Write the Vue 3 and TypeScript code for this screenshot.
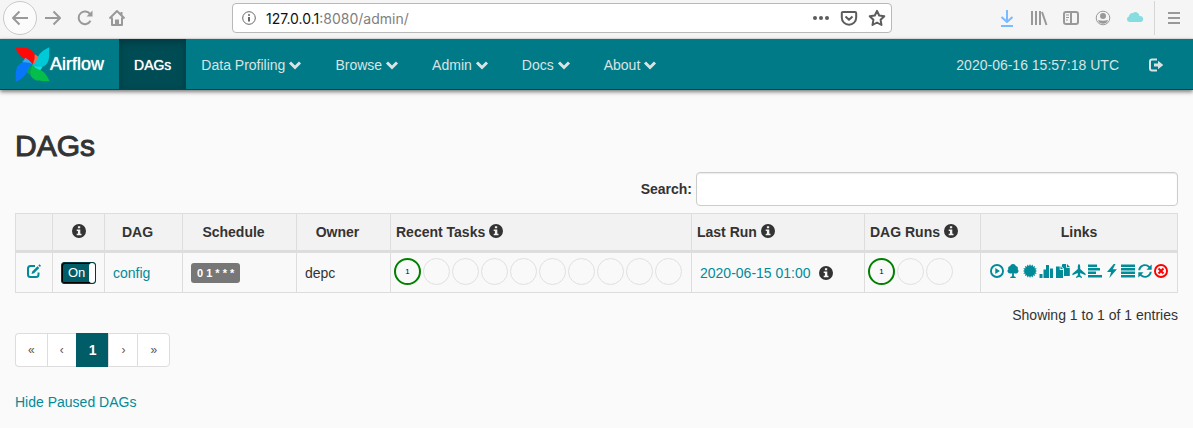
<script setup lang="ts">
import { ref } from 'vue'

interface MenuItem {
  label: string
  active?: boolean
}

interface LinkIcon {
  title: string
  path: string
  danger?: boolean
}

interface Blade {
  angle: number
  color: string
  light: string
}

const menu: MenuItem[] = [
  { label: 'DAGs', active: true },
  { label: 'Data Profiling' },
  { label: 'Browse' },
  { label: 'Admin' },
  { label: 'Docs' },
  { label: 'About' },
]

const blades: Blade[] = [
  { angle: 0, color: '#ff0808', light: '#ff6846' },
  { angle: 90, color: '#00c9d8', light: '#19dce5' },
  { angle: 180, color: '#04bd4b', light: '#00a553' },
  { angle: 270, color: '#0876f8', light: '#32a9f7' },
]

const infoPath =
  'M7 0a7 7 0 1 0 0 14A7 7 0 0 0 7 0zM5.9 2.3h2.3v2H5.9zM4.7 5.4h3.6v4.4h1.2v1.5H4.7V9.8h1.2V6.9H4.7z'

const linkIcons: LinkIcon[] = [
  {
    title: 'Trigger Dag',
    path: 'M7 0a7 7 0 1 0 0 14A7 7 0 0 0 7 0zM7 1.9a5.1 5.1 0 1 1 0 10.2A5.1 5.1 0 0 1 7 1.9zM5.3 4v6l4.6-3z',
  },
  {
    title: 'Tree View',
    path: 'M7 0a3 3 0 0 0-2.9 2A2.5 2.5 0 0 0 2.3 5.2A2.5 2.5 0 0 0 3.8 9.5Q5.3 9.9 6.1 8.9V12.3L4.3 13V14H9.7V13L7.9 12.3V8.9Q8.7 9.9 10.2 9.5A2.5 2.5 0 0 0 11.7 5.2A2.5 2.5 0 0 0 9.9 2A3 3 0 0 0 7 0z',
  },
  {
    title: 'Graph View',
    path: 'M7 0 8 2.1 9.7 .5 10 2.8 12 2 11.5 4.2 13.7 4.2 12.3 6 14 7 12.3 8 13.7 9.8 11.5 9.8 12 12 10 11.2 9.7 13.5 8 11.9 7 14 6 11.9 4.3 13.5 4 11.2 2 12 2.5 9.8 .3 9.8 1.7 8 0 7 1.7 6 .3 4.2 2.5 4.2 2 2 4 2.8 4.3 .5 6 2.1z',
  },
  {
    title: 'Tasks Duration',
    path: 'M.5 10h3v4h-3zM4.500 5.500h2.500V14H4.500zM7 1h3v13H7zM11 4.500h3V14h-3z',
  },
  {
    title: 'Task Tries',
    path: 'M0 2.5h3.7V6H7v8H0zM4.5 2.3 7 4.9H4.5zM6.3 0h3.8v3.8h3.7V12H8V4.8L5.7 2.4zM11 0l3 3h-3z',
  },
  {
    title: 'Landing Times',
    path: 'M7 0Q8.1 .4 8.2 2.4V5L13.6 9.8V11.2L8.2 9V11.3L10 13V14L7 13.1 4 14V13L5.8 11.3V9L.4 11.2V9.8L5.8 5V2.4Q5.9 .4 7 0z',
  },
  {
    title: 'Gantt View',
    path: 'M0 .5h9v2.500H0zM0 4h12v2.500H0zM0 7.500h8v2.500H0zM0 11h14v2.500H0z',
  },
  {
    title: 'Code View',
    path: 'M8.7 0 2 8H6.1L4.3 14 11.9 5.3H7.8L10.5 0z',
  },
  {
    title: 'Logs',
    path: 'M0 .5h14v2.500H0zM0 4h14v2.500H0zM0 7.500h14v2.500H0zM0 11h14v2.500H0z',
  },
  {
    title: 'Refresh',
    path: 'M.3 6.3C.6 2.5 3.7 .3 7 .3 9 .3 10.6 1.1 11.7 2.3L13.7 .6V5.8H8.5L10.5 3.7C9.6 2.7 8.4 2.1 7 2.1 4.7 2.1 2.6 3.7 2.2 6.3zM13.7 7.7C13.4 11.5 10.3 13.7 7 13.7 5 13.7 3.4 12.9 2.3 11.7L.3 13.4V8.2H5.5L3.5 10.3C4.4 11.3 5.6 11.9 7 11.9 9.3 11.9 11.4 10.3 11.8 7.7z',
  },
  {
    title: 'Delete Dag',
    danger: true,
    path: 'M7 0a7 7 0 1 0 0 14A7 7 0 0 0 7 0zM7 1.9a5.1 5.1 0 1 1 0 10.2A5.1 5.1 0 0 1 7 1.9zM5.2 3.8 3.8 5.2 5.6 7 3.8 8.8 5.2 10.2 7 8.4 8.8 10.2 10.2 8.8 8.4 7 10.2 5.2 8.8 3.8 7 5.6z',
  },
]

const taskCounts: (number | null)[] = [1, ...Array<null>(9).fill(null)]
const runCounts: (number | null)[] = [1, null, null]
const pages: string[] = ['«', '‹', '1', '›', '»']

const search = ref('')
const enabled = ref(true)
</script>

<template>
  <div class="window">
    <header class="chrome">
      <div class="chrome-left">
        <button class="back" aria-label="Back">
          <svg width="18" height="18" viewBox="0 0 18 18" class="line"><path d="M17 9H2M8.500 2.500 2 9l6.500 6.500" /></svg>
        </button>
        <button aria-label="Forward">
          <svg width="18" height="18" viewBox="0 0 18 18" class="line"><path d="M1 9h15M9.500 2.500 16 9l-6.500 6.500" /></svg>
        </button>
        <button aria-label="Reload">
          <svg width="18" height="18" viewBox="0 0 18 18" class="line"><path d="M14.500 11.800A6.300 6.300 0 1 1 14.300 5.500" /><path d="M16.500 1.500V7.500H10.500z" class="solid" /></svg>
        </button>
        <button aria-label="Home">
          <svg width="18" height="18" viewBox="0 0 18 18" class="line"><path d="M1.500 9.500 9 2l7.500 7.500M4 8.500V16h10V8.500M13.500 3v3" /><path d="M7 16v-5.500h4V16z" class="solid" /></svg>
        </button>
      </div>
      <div class="address">
        <svg class="site-info" width="14" height="14" viewBox="0 0 14 14"><circle cx="7" cy="7" r="6.300" /><path d="M7 6v4.500M7 3.300v1.500" /></svg>
        <span class="url"><b>127.0.0.1</b>:8080/admin/</span>
        <button aria-label="Page actions">
          <svg width="18" height="18" viewBox="0 0 18 18" class="dark-solid"><circle cx="3" cy="9" r="2" /><circle cx="9" cy="9" r="2" /><circle cx="15" cy="9" r="2" /></svg>
        </button>
        <button aria-label="Save to Pocket">
          <svg width="18" height="18" viewBox="0 0 18 18" class="dark-line"><path d="M3 3h12q1.200 0 1.200 1.200V8.500a7.200 7.200 0 0 1-14.400 0V4.200Q1.800 3 3 3zM5.500 7.500 9 10.800l3.500-3.300" /></svg>
        </button>
        <button aria-label="Bookmark">
          <svg width="18" height="18" viewBox="0 0 18 18" class="dark-line"><path d="M9 1.800 11.200 6.500 16.300 7.200 12.600 10.800 13.500 16 9 13.500 4.500 16 5.400 10.800 1.700 7.200 6.800 6.500z" /></svg>
        </button>
      </div>
      <div class="chrome-right">
        <button aria-label="Downloads">
          <svg width="18" height="18" viewBox="0 0 18 18" class="line blue"><path d="M9 1v12M3.500 8 9 13l5.500-5M3 17h12" /></svg>
        </button>
        <button aria-label="Library">
          <svg width="18" height="18" viewBox="0 0 18 18" class="line"><path d="M2 2v14M6 2v14M10 2v14M12 3l4.500 13" /></svg>
        </button>
        <button aria-label="Sidebars">
          <svg width="18" height="18" viewBox="0 0 18 18" class="line"><rect x="2" y="3" width="14" height="12" rx="2" /><path d="M9 3v12" /><path d="M4 6h3M4 8.500h3M4 11h2" class="thin" /></svg>
        </button>
        <button aria-label="Account">
          <svg width="18" height="18" viewBox="0 0 18 18" class="line"><circle cx="9" cy="9" r="6.800" class="thin" /><circle cx="9" cy="7" r="3" class="solid" /><path d="M4 11q5 1.500 10 0-.7 3.500-5 3.700Q4.700 14.500 4 11z" class="solid" /></svg>
        </button>
        <button aria-label="Cloud">
          <svg width="18" height="18" viewBox="0 0 18 18" class="cloud"><path d="M3.500 13a2.800 2.800 0 0 1-.5-5.500A3.500 3.500 0 0 1 7 4a4 4 0 0 1 6.500 3A3.100 3.100 0 0 1 15 13z" /></svg>
        </button>
        <button class="menu-button" aria-label="Open menu">
          <svg width="18" height="18" viewBox="0 0 18 18" class="line"><path d="M3 4h12M3 9h12M3 14h12" /></svg>
        </button>
      </div>
    </header>

    <nav class="navbar">
      <a class="brand" href="#">
        <svg width="35" height="35" viewBox="0 0 105 105">
          <g v-for="blade in blades" :key="blade.angle" :transform="`rotate(${blade.angle} 52.5 52.5)`">
            <path d="M1 2C16 3 36 0 48 8Q59 16 61 29L53 53C49 44 38 39 28 35Q12 28 1 2z" :fill="blade.color" />
            <path d="M59 22 73 31Q68 43 53 53 61 37 59 22z" :fill="blade.light" />
          </g>
        </svg><span>Airflow</span>
      </a>
      <ul>
        <li v-for="item in menu" :key="item.label">
          <a href="#" :class="{ active: item.active }">{{ item.label }}<svg v-if="!item.active" class="chevron" width="14" height="14" viewBox="0 0 14 14"><path d="M2 4.500 7 9.500l5-5" /></svg></a>
        </li>
      </ul>
      <div class="nav-right">
        <a href="#">2020-06-16 15:57:18 UTC</a>
        <a href="#" aria-label="Logout">
          <svg width="14" height="14" viewBox="0 0 14 14"><path d="M8 1.500H3Q1 1.500 1 3.500v7Q1 12.500 3 12.500h5" fill="none" stroke="currentColor" stroke-width="2" /><path d="M5 5.500h4V2.800L14.300 7 9 11.200V8.500H5z" fill="currentColor" /></svg>
        </a>
      </div>
    </nav>

    <main>
      <h1>DAGs</h1>
      <div class="search">
        <label for="dag-search">Search:</label>
        <input id="dag-search" v-model="search" type="search" />
      </div>

      <table>
        <colgroup>
          <col class="c-edit" /><col class="c-toggle" /><col class="c-dag" /><col class="c-schedule" /><col class="c-owner" />
          <col /><col class="c-last" /><col class="c-runs" /><col class="c-links" />
        </colgroup>
        <thead>
          <tr>
            <th></th>
            <th><svg class="info" width="14" height="14" viewBox="0 0 14 14"><path :d="infoPath" /></svg></th>
            <th class="sortable">DAG</th>
            <th class="sortable">Schedule</th>
            <th class="sortable">Owner</th>
            <th class="start">Recent Tasks <svg class="info" width="14" height="14" viewBox="0 0 14 14"><path :d="infoPath" /></svg></th>
            <th class="start">Last Run <svg class="info" width="14" height="14" viewBox="0 0 14 14"><path :d="infoPath" /></svg></th>
            <th class="start">DAG Runs <svg class="info" width="14" height="14" viewBox="0 0 14 14"><path :d="infoPath" /></svg></th>
            <th>Links</th>
          </tr>
        </thead>
        <tbody>
          <tr>
            <td class="edit">
              <a href="#" aria-label="Edit"><svg width="14" height="14" viewBox="0 0 14 14"><path d="M8 2H3.500Q1 2 1 4.500v6Q1 13 3.500 13h5.500q2.500 0 2.500-2.500V8.500" fill="none" stroke="currentColor" stroke-width="2" /><path d="M4.500 10 5.200 7.500 10.500 2.200 12.300 4 7 9.300zM11.300 1.400 12.500 .2 14 1.700 12.900 3z" fill="currentColor" /></svg></a>
            </td>
            <td>
              <label class="toggle"><span>On</span><input v-model="enabled" type="checkbox" /></label>
            </td>
            <td><a href="#">config</a></td>
            <td><a class="badge" href="#">0 1 * * *</a></td>
            <td>depc</td>
            <td class="circles">
              <div><span v-for="(n, i) in taskCounts" :key="i" :class="{ success: n }">{{ n }}</span></div>
            </td>
            <td>
              <div class="last-run"><a href="#">2020-06-15 01:00</a><svg class="info" width="14" height="14" viewBox="0 0 14 14"><path :d="infoPath" /></svg></div>
            </td>
            <td class="circles">
              <div><span v-for="(n, i) in runCounts" :key="i" :class="{ success: n }">{{ n }}</span></div>
            </td>
            <td>
              <div class="links">
                <a v-for="icon in linkIcons" :key="icon.title" href="#" :aria-label="icon.title" :class="{ danger: icon.danger }">
                  <svg width="14" height="14" viewBox="0 0 14 14"><path :d="icon.path" fill="currentColor" fill-rule="evenodd" /></svg>
                </a>
              </div>
            </td>
          </tr>
        </tbody>
      </table>

      <p class="summary">Showing 1 to 1 of 1 entries</p>
      <ul class="pagination">
        <li v-for="page in pages" :key="page"><a href="#" :class="{ current: page === '1' }">{{ page }}</a></li>
      </ul>
      <a class="paused" href="#">Hide Paused DAGs</a>
    </main>
  </div>
</template>

<style>
body {
  margin: 0;
  background: #fafafa;
}
</style>

<style scoped>
* {
  box-sizing: border-box;
}
.window {
  font: 14px/20px "Liberation Sans", Arial, sans-serif;
  color: #333;
}
a {
  color: #018b99;
  text-decoration: none;
}
svg {
  display: block;
}
ul {
  list-style: none;
  margin: 0;
  padding: 0;
}
button {
  display: flex;
  align-items: center;
  justify-content: center;
  padding: 0;
  border: 0;
  background: none;
}

.chrome {
  display: grid;
  grid-template-columns: 232px 1fr 301px;
  align-items: center;
  height: 39px;
  padding-bottom: 3px;
  background: #f5f5f5;
  border-bottom: 1px solid #e3e3e3;
}
.chrome-left {
  display: flex;
  align-items: center;
  gap: 14px;
  padding-left: 3px;
}
.back {
  width: 34px;
  height: 34px;
  margin-right: -7px;
  border: 1px solid #c9c9c9;
  border-radius: 50%;
  background: #fbfbfb;
}
.line {
  fill: none;
  stroke: #999;
  stroke-width: 2;
  stroke-linejoin: round;
}
.line .solid {
  fill: #999;
  stroke: none;
}
.line .thin {
  stroke-width: 1;
}
.line.blue {
  stroke: #7abaff;
}
.cloud {
  fill: #86dde0;
}
.dark-line {
  fill: none;
  stroke: #5c5c5c;
  stroke-width: 2;
  stroke-linejoin: round;
}
.dark-solid {
  fill: #5c5c5c;
}
.address {
  display: flex;
  align-items: center;
  gap: 10px;
  height: 30px;
  padding: 0 5px 0 9px;
  border: 1px solid #b9b9b9;
  border-radius: 4px;
  background: #fff;
}
.site-info {
  fill: none;
  stroke: #666;
}
.site-info path {
  stroke-width: 2;
}
.url {
  flex: 1;
  padding-top: 2px;
  font: 14px/20px Inter, "Liberation Sans", sans-serif;
  color: #808080;
}
.url b {
  font-weight: 400;
  color: #111;
}
.chrome-right {
  display: flex;
  align-items: center;
  justify-content: flex-end;
  gap: 14px;
  padding-right: 10px;
}
.menu-button {
  height: 34px;
  margin-left: -4px;
  padding-left: 10px;
  border-left: 1px solid #d6d6d6;
}

.navbar {
  display: flex;
  height: 51px;
  padding: 0 15px;
  background: #007a87;
  border-bottom: 1px solid #004b53;
  box-shadow: 0 2px 4px rgba(0, 0, 0, 0.5);
}
.navbar ul,
.nav-right {
  display: flex;
}
.navbar a {
  display: flex;
  align-items: center;
  height: 50px;
  padding: 2px 15px 0;
  color: #d9e3e4;
  white-space: nowrap;
}
.navbar a.brand {
  padding: 0 15px 0 0;
  font-size: 18px;
  color: #fff;
  text-shadow: 0 0 1px #fff;
}
.navbar a.active {
  color: #fff;
  text-shadow: 0 0 1px #fff;
  background: #004c54;
  box-shadow: inset 0 3px 9px rgba(0, 0, 0, 0.25);
}
.chevron {
  margin: 0 3px;
  fill: none;
  stroke: currentColor;
  stroke-width: 3;
}
.nav-right {
  margin-left: auto;
}

main {
  padding: 39px 15px 0;
}
h1 {
  margin: 0;
  font-size: 30px;
  line-height: 33px;
  font-weight: 400;
  -webkit-text-stroke: 1px #333;
}
.search {
  display: flex;
  align-items: center;
  justify-content: flex-end;
  gap: 4px;
  margin: 10px 0 7px;
  font-weight: 700;
}
.search input {
  width: 482px;
  height: 34px;
  padding: 6px 12px;
  font: inherit;
  border: 1px solid #ccc;
  border-radius: 4px;
  background: #fff;
  box-shadow: inset 0 1px 1px rgba(0, 0, 0, 0.08);
}

table {
  width: 100%;
  table-layout: fixed;
  border-collapse: separate;
  border-spacing: 0;
  border: solid #ddd;
  border-width: 1px 0 0 1px;
}
.c-edit { width: 37px; }
.c-toggle { width: 52px; }
.c-dag { width: 78px; }
.c-schedule { width: 114px; }
.c-owner { width: 94px; }
.c-last { width: 173px; }
.c-runs { width: 116px; }
.c-links { width: 197px; }
th,
td {
  border-right: 1px solid #ddd;
  white-space: nowrap;
}
th {
  height: 39px;
  padding: 0 5px;
  border-bottom: 3px solid #ddd;
  background: #f2f2f2;
}
th.sortable {
  padding-right: 17px;
}
th.start {
  text-align: left;
}
td {
  height: 40px;
  padding: 0 8px;
  border-bottom: 1px solid #ddd;
  background: #f9f9f9;
}
.info {
  display: inline-block;
  vertical-align: -1px;
  fill: #333;
  fill-rule: evenodd;
}
.edit a {
  display: flex;
  justify-content: center;
  padding-bottom: 3px;
}
.toggle {
  display: flex;
  align-items: center;
  justify-content: space-between;
  width: 35px;
  height: 22px;
  padding-left: 6px;
  font-size: 13px;
  color: #fff;
  background: #005c66;
  border: 1px solid #003a41;
  border-radius: 3px;
  box-shadow: inset 1px 1px 0 #000, inset 0 -1px 0 #000;
}
.toggle input {
  appearance: none;
  width: 6px;
  height: 20px;
  margin: 0;
  border-radius: 3px;
  background: #fff;
}
.badge {
  display: inline-block;
  height: 20px;
  padding: 0 6px;
  font-size: 11px;
  font-weight: 700;
  color: #fff;
  background: #777;
  border-radius: 3px;
  vertical-align: middle;
}
td.circles {
  padding: 0 0 0 3px;
}
.circles div {
  display: flex;
  gap: 2px;
  padding-bottom: 2px;
}
.circles span {
  width: 27px;
  height: 27px;
  border: 1px solid #e0e0e0;
  border-radius: 50%;
  font-size: 8px;
  line-height: 24px;
  text-align: center;
  color: #000;
}
.circles span.success {
  border: 2px solid #008000;
}
.last-run {
  display: flex;
  align-items: center;
  gap: 8px;
}
.links {
  display: flex;
  justify-content: space-between;
  padding: 0 1px 3px;
}
.links a.danger {
  color: #f00;
}

.summary {
  margin: 12px 0 8px;
  text-align: right;
}
.pagination {
  display: flex;
}
.pagination a {
  display: block;
  height: 34px;
  padding: 0 12px;
  font-size: 12px;
  line-height: 32px;
  color: #555;
  background: #fff;
  border: 1px solid #ddd;
  border-right-width: 0;
}
.pagination li:first-child a {
  border-radius: 4px 0 0 4px;
}
.pagination li:last-child a {
  border-right-width: 1px;
  border-radius: 0 4px 4px 0;
}
.pagination a.current {
  font-size: 14px;
  font-weight: 700;
  color: #fff;
  background: #005c66;
  border-color: #005c66;
}
.paused {
  display: inline-block;
  margin-top: 25px;
}
</style>
